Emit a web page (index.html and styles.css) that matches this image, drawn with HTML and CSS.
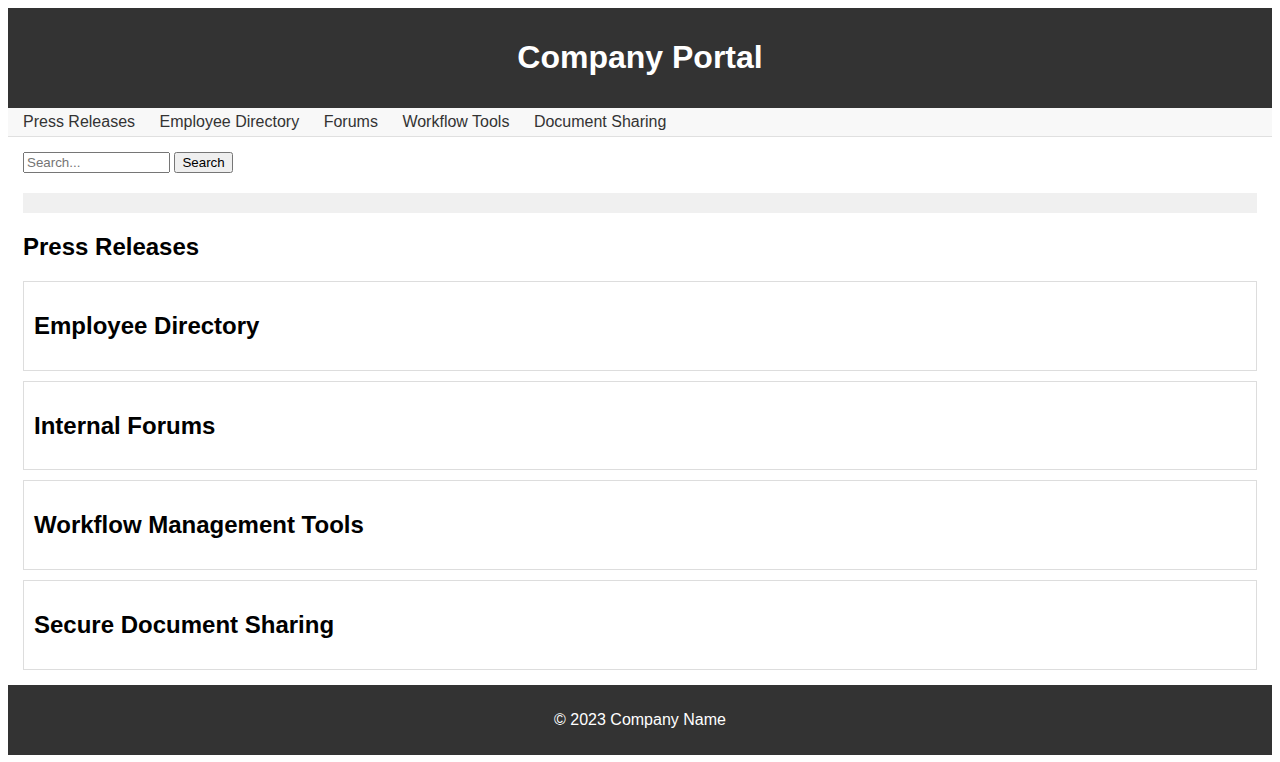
FILE: index.html
```html
<!DOCTYPE html>
<html lang="en">
<head>
<meta charset="utf-8">
<title>Company Portal</title>
<link rel="stylesheet" href="styles.css">
</head>
<body>
<header class="site-header">
  <h1>Company Portal</h1>
</header>
<nav class="site-nav">
  <a href="#press">Press Releases</a>
  <a href="#directory">Employee Directory</a>
  <a href="#forums">Forums</a>
  <a href="#workflow">Workflow Tools</a>
  <a href="#documents">Document Sharing</a>
</nav>
<main class="content">
  <form class="search-form">
    <input class="search-input" type="text" placeholder="Search..."> <button class="search-button" type="button">Search</button>
  </form>
  <div class="notice"></div>
  <h2 id="press">Press Releases</h2>
  <div class="cards">
    <section class="card" id="directory"><h2>Employee Directory</h2></section>
    <section class="card" id="forums"><h2>Internal Forums</h2></section>
    <section class="card" id="workflow"><h2>Workflow Management Tools</h2></section>
    <section class="card" id="documents"><h2>Secure Document Sharing</h2></section>
  </div>
</main>
<footer class="site-footer">
  <p>&copy; 2023 Company Name</p>
</footer>
</body>
</html>
```
FILE: styles.css
```css
body {
  margin: 8px;
  font-family: "Liberation Sans", Arial, sans-serif;
}
.site-header {
  background: #333;
  color: #fff;
  padding: 10px;
  text-align: center;
}
.site-header h1 {
  font-size: 32px;
  margin: 21.44px 0;
}
.site-nav {
  display: flex;
  gap: 24.5px;
  background: #f8f8f8;
  padding: 5px 15px;
  border-bottom: 1px solid #e0e0e0;
  font-size: 16px;
}
.site-nav a {
  color: #333;
  text-decoration: none;
}
.content {
  padding: 15px;
}
.search-form {
  margin: 0;
}
.search-input {
  width: 147px;
  box-sizing: border-box;
}
.notice {
  background: #f0f0f0;
  margin: 20px 0;
  padding: 10px;
}
.content h2 {
  font-size: 24px;
  margin: 19.92px 0;
}
.cards {
  display: flex;
  flex-direction: column;
  gap: 10px;
}
.card {
  border: 1px solid #ddd;
  padding: 10px;
}
.site-footer {
  background: #333;
  color: #fff;
  padding: 10px;
  text-align: center;
}
.site-footer p {
  margin: 16px 0;
}
```
